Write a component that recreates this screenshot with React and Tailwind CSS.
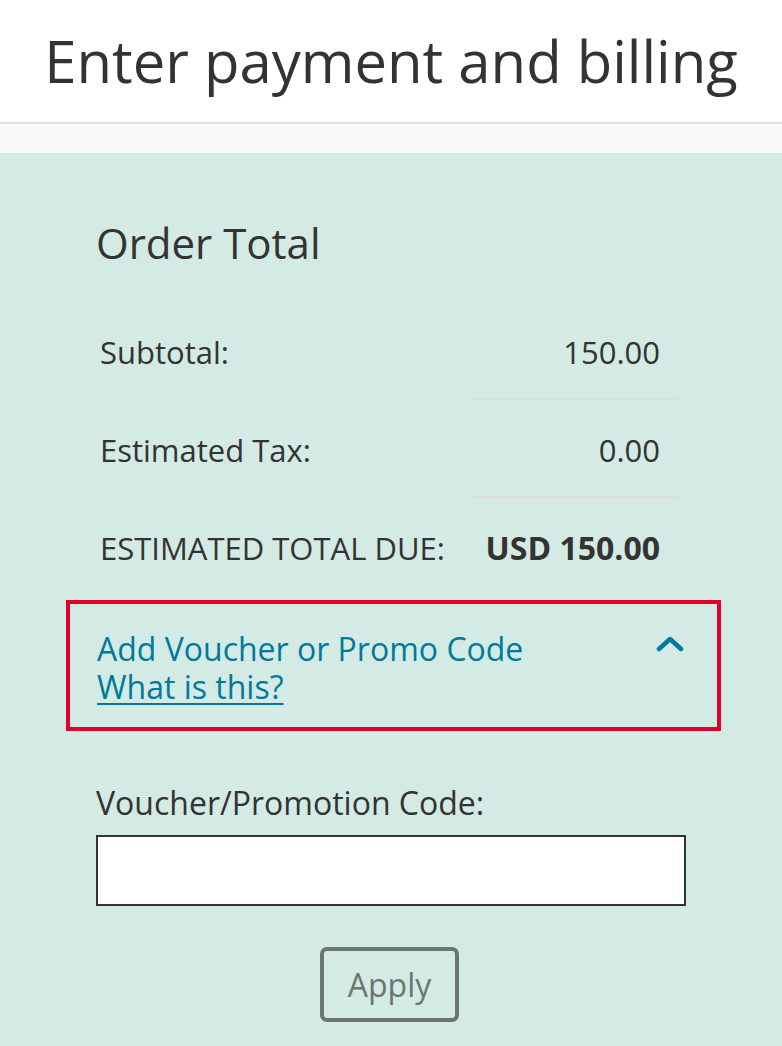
export default function App() {
  const rows = [
    { label: 'Subtotal:', value: '150.00', divider: true },
    { label: 'Estimated Tax:', value: '0.00', divider: true },
    { label: 'ESTIMATED TOTAL DUE:', value: 'USD 150.00', bold: true },
  ]

  return (
    <div className="min-h-screen flex flex-col bg-[#d4eae4] text-[#333333] font-['Open_Sans',sans-serif]">
      {/* page header */}
      <header className="bg-white h-[124px] flex items-center justify-center border-b-2 border-[#e0e0e0]">
        <h1 className="text-[58px] leading-[70px] font-normal">Enter payment and billing</h1>
      </header>
      <div className="h-[29px] bg-[#f8f8f8]" />

      {/* order total */}
      <section className="ml-[66px] w-[655px] pt-[65px] pb-6">
        <h2 className="pl-[30px] text-[42px] leading-[50px] font-normal">Order Total</h2>

        <div className="mt-[34px] pl-[34px] pr-[45px]">
          {rows.map(row => (
            <div key={row.label} className="flex justify-between">
              <div className="pt-[30px] pb-[28px] text-[31px] leading-[40px]">{row.label}</div>
              <div className={`w-[206px] pt-[30px] pb-[26px] pr-4 text-right leading-[40px] ${row.divider ? 'border-b-2 border-[#dddfdf]' : ''} ${row.bold ? 'font-bold text-[32px]' : 'text-[31px]'}`}>
                {row.value}
              </div>
            </div>
          ))}
        </div>

        {/* promo toggle */}
        <div className="mt-[4px] border-4 border-[#e0002a] pl-[27px] pr-[33px] pt-[26px] pb-[21px] flex justify-between items-start">
          <div className="text-[32px] leading-[38px] text-[#007a9c]">
            <div>Add Voucher or Promo Code</div>
            <a href="#" className="block w-fit underline underline-offset-[4px] decoration-2">What is this?</a>
          </div>
          <svg width="28" height="16" viewBox="0 0 28 16" className="mt-[6px]" fill="none">
            <polyline points="3,13 14,3 25,13" stroke="#007a9c" strokeWidth="4.5" strokeLinecap="round" strokeLinejoin="round" />
          </svg>
        </div>

        {/* voucher form */}
        <div className="mt-[52px] pl-[30px]">
          <label className="block text-[32px] leading-[40px]">Voucher/Promotion Code:</label>
          <input type="text" className="mt-[12px] block w-[590px] h-[71px] bg-white border-2 border-[#333333] outline-none px-3 text-[28px]" />
          <div className="mt-[41px] w-[590px] flex justify-center">
            <button className="w-[139px] h-[75px] border-4 border-[#6b7671] rounded-[7px] text-[32px] text-[#6b7671] -ml-[3px]">Apply</button>
          </div>
        </div>
      </section>
    </div>
  )
}
